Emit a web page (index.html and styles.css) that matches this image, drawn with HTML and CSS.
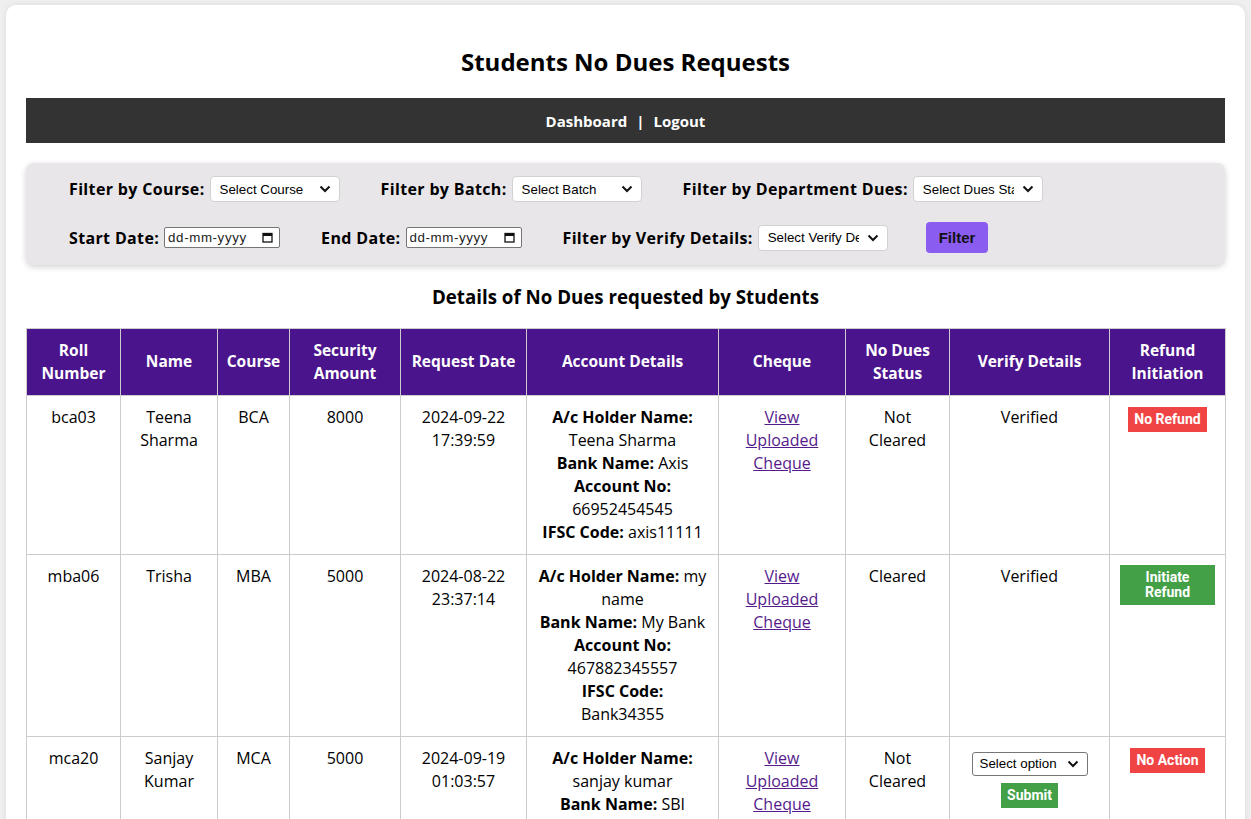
FILE: index.html
```html
<!DOCTYPE html>
<html lang="en">
<head>
<meta charset="utf-8">
<title>Students No Dues Requests</title>
<link rel="stylesheet" href="styles.css">
</head>
<body>
<div class="page">
  <h2 class="title">Students No Dues Requests</h2>
  <nav class="navbar">
    <a href="#" class="nav-link">Dashboard</a>
    <span class="sep">|</span>
    <a href="#" class="nav-link">Logout</a>
  </nav>

  <form class="filters">
    <div class="filter-row">
      <div class="field">
        <label class="flabel">Filter by Course:</label>
        <span class="sel-wrap">
          <select class="fsel"><option>Select Course</option></select>
          <svg class="chev" width="12" height="8" viewBox="0 0 12 8"><path d="M1.5 1.5 6 6l4.5-4.5" fill="none" stroke="#111" stroke-width="2"/></svg>
        </span>
      </div>
      <div class="field">
        <label class="flabel">Filter by Batch:</label>
        <span class="sel-wrap">
          <select class="fsel"><option>Select Batch</option></select>
          <svg class="chev" width="12" height="8" viewBox="0 0 12 8"><path d="M1.5 1.5 6 6l4.5-4.5" fill="none" stroke="#111" stroke-width="2"/></svg>
        </span>
      </div>
      <div class="field">
        <label class="flabel">Filter by Department Dues:</label>
        <span class="sel-wrap">
          <select class="fsel"><option>Select Dues Status</option></select>
          <svg class="chev" width="12" height="8" viewBox="0 0 12 8"><path d="M1.5 1.5 6 6l4.5-4.5" fill="none" stroke="#111" stroke-width="2"/></svg>
        </span>
      </div>
    </div>
    <div class="filter-row">
      <div class="field">
        <label class="flabel">Start Date:</label>
        <span class="date-wrap">
          <input type="text" class="fdate" placeholder="dd-mm-yyyy">
          <svg class="cal" width="11" height="11" viewBox="0 0 11 11"><rect x="1" y="1.5" width="9" height="8.5" fill="none" stroke="#111" stroke-width="1.3"/><rect x="1" y="1.5" width="9" height="2.5" fill="#111"/></svg>
        </span>
      </div>
      <div class="field">
        <label class="flabel">End Date:</label>
        <span class="date-wrap">
          <input type="text" class="fdate" placeholder="dd-mm-yyyy">
          <svg class="cal" width="11" height="11" viewBox="0 0 11 11"><rect x="1" y="1.5" width="9" height="8.5" fill="none" stroke="#111" stroke-width="1.3"/><rect x="1" y="1.5" width="9" height="2.5" fill="#111"/></svg>
        </span>
      </div>
      <div class="field">
        <label class="flabel">Filter by Verify Details:</label>
        <span class="sel-wrap">
          <select class="fsel"><option>Select Verify Details</option></select>
          <svg class="chev" width="12" height="8" viewBox="0 0 12 8"><path d="M1.5 1.5 6 6l4.5-4.5" fill="none" stroke="#111" stroke-width="2"/></svg>
        </span>
      </div>
      <button type="button" class="filter-btn">Filter</button>
    </div>
  </form>

  <h3 class="subtitle">Details of No Dues requested by Students</h3>

  <table class="dues">
    <colgroup>
      <col class="c-roll"><col class="c-name"><col class="c-course"><col class="c-amount"><col class="c-date">
      <col class="c-account"><col class="c-cheque"><col class="c-status"><col class="c-verify"><col class="c-refund">
    </colgroup>
    <thead>
      <tr>
        <th>Roll Number</th>
        <th>Name</th>
        <th>Course</th>
        <th>Security Amount</th>
        <th>Request Date</th>
        <th>Account Details</th>
        <th>Cheque</th>
        <th>No Dues Status</th>
        <th>Verify Details</th>
        <th>Refund Initiation</th>
      </tr>
    </thead>
    <tbody>
      <tr>
        <td>bca03</td>
        <td>Teena Sharma</td>
        <td>BCA</td>
        <td>8000</td>
        <td>2024-09-22 17:39:59</td>
        <td><b>A/c Holder Name:</b> Teena Sharma<br><b>Bank Name:</b> Axis<br><b>Account No:</b> 66952454545<br><b>IFSC Code:</b> axis11111</td>
        <td><a href="#" class="cheque-link">View Uploaded Cheque</a></td>
        <td>Not Cleared</td>
        <td>Verified</td>
        <td class="refund-cell"><span class="tag tag-red">No Refund</span></td>
      </tr>
      <tr>
        <td>mba06</td>
        <td>Trisha</td>
        <td>MBA</td>
        <td>5000</td>
        <td>2024-08-22 23:37:14</td>
        <td><b>A/c Holder Name:</b> my name<br><b>Bank Name:</b> My Bank<br><b>Account No:</b> 467882345557<br><b>IFSC Code:</b><br>Bank34355</td>
        <td><a href="#" class="cheque-link">View Uploaded Cheque</a></td>
        <td>Cleared</td>
        <td>Verified</td>
        <td class="refund-cell"><button type="button" class="refund-btn">Initiate Refund</button></td>
      </tr>
      <tr>
        <td>mca20</td>
        <td>Sanjay Kumar</td>
        <td>MCA</td>
        <td>5000</td>
        <td>2024-09-19 01:03:57</td>
        <td><b>A/c Holder Name:</b> sanjay kumar<br><b>Bank Name:</b> SBI<br><b>Account No:</b> 30245678912<br><b>IFSC Code:</b> SBIN0001234</td>
        <td><a href="#" class="cheque-link">View Uploaded Cheque</a></td>
        <td>Not Cleared</td>
        <td>
          <div class="verify-form">
            <span class="sel-wrap">
              <select class="vsel"><option>Select option</option></select>
              <svg class="chev" width="12" height="8" viewBox="0 0 12 8"><path d="M1.5 1.5 6 6l4.5-4.5" fill="none" stroke="#111" stroke-width="2"/></svg>
            </span>
            <button type="button" class="submit-btn">Submit</button>
          </div>
        </td>
        <td class="refund-cell"><span class="tag tag-red">No Action</span></td>
      </tr>
    </tbody>
  </table>
</div>
</body>
</html>
```

FILE: styles.css
```css
html, body {
  margin: 0;
  padding: 0;
}

body {
  background: #efefef;
  font-family: "Open Sans", "DejaVu Sans", sans-serif;
  color: #000;
  padding: 5px 6px;
}

.page {
  background: #fff;
  border-radius: 10px;
  box-shadow: 0 0 6px rgba(0, 0, 0, 0.08);
  padding: 20px 20px 40px;
}

.title {
  font-size: 24px;
  font-weight: 700;
  line-height: 33px;
  text-align: center;
  margin: 20px 0 20px;
}

.navbar {
  background: #333;
  height: 45px;
  display: flex;
  align-items: center;
  justify-content: center;
  gap: 9px;
  color: #fff;
  font-weight: 700;
  font-size: 15px;
}

.nav-link {
  color: #fff;
  text-decoration: none;
}

.sep {
  color: #fff;
}

.filters {
  margin-top: 20px;
  background: #e8e6e9;
  border-radius: 8px;
  box-shadow: 0 2px 6px rgba(0, 0, 0, 0.18);
  padding: 13px 20px 12px 43px;
  display: flex;
  flex-direction: column;
  gap: 20px;
}

.filter-row {
  display: flex;
  align-items: center;
  gap: 41px;
}

.field {
  display: flex;
  align-items: center;
  gap: 5px;
}

.flabel {
  font-weight: 700;
  font-size: 16px;
  letter-spacing: 0.35px;
}

.sel-wrap {
  position: relative;
  display: inline-flex;
}

.chev {
  position: absolute;
  right: 9px;
  top: 50%;
  margin-top: -4px;
  pointer-events: none;
}

.fsel {
  appearance: none;
  -webkit-appearance: none;
  width: 130px;
  height: 26px;
  background: #fff;
  border: 1px solid #d2d2d2;
  border-radius: 4px;
  padding: 0 28px 0 9px;
  font-family: "Liberation Sans", Arial, sans-serif;
  font-size: 13.33px;
  color: #000;
}

.date-wrap {
  position: relative;
  display: inline-flex;
}

.fdate {
  width: 116px;
  height: 21px;
  box-sizing: border-box;
  border: 1px solid #767676;
  border-radius: 2px;
  padding: 0 3px;
  font-family: "Liberation Sans", Arial, sans-serif;
  font-size: 13.33px;
  letter-spacing: 0.6px;
  background: #fff;
  color: #000;
}

.fdate::placeholder {
  color: #222;
  opacity: 1;
}

.cal {
  position: absolute;
  right: 7px;
  top: 5px;
  pointer-events: none;
}

.filter-btn {
  margin-left: -3px;
  background: #8b5cf0;
  color: #111;
  border: none;
  border-radius: 4px;
  height: 31px;
  padding: 0 13px;
  font-family: "Liberation Sans", Arial, sans-serif;
  font-weight: 700;
  font-size: 15px;
}

.subtitle {
  font-size: 18.72px;
  font-weight: 700;
  line-height: 26px;
  text-align: center;
  margin: 18.7px 0 18px;
}

.dues {
  width: 100%;
  border-collapse: collapse;
  table-layout: fixed;
  font-size: 16px;
  line-height: 23px;
}

.c-roll { width: 94px; }
.c-name { width: 97px; }
.c-course { width: 72px; }
.c-amount { width: 111px; }
.c-date { width: 126px; }
.c-account { width: 192px; }
.c-cheque { width: 127px; }
.c-status { width: 104px; }
.c-verify { width: 160px; }
.c-refund { width: 116px; }

.dues th,
.dues td {
  border: 1px solid #cccccc;
  padding: 10px 8px;
  text-align: center;
}

.dues th {
  background: #4a148c;
  color: #fff;
  font-weight: 700;
  font-size: 15.5px;
  vertical-align: middle;
}

.dues td {
  vertical-align: top;
}

.dues td.refund-cell {
  padding: 10px;
}

.cheque-link {
  color: #551a8b;
  text-decoration: underline;
}

.tag {
  display: inline-block;
  font-family: Roboto, "Liberation Sans", sans-serif;
  font-weight: 700;
  font-size: 14px;
  line-height: 15px;
  color: #fff;
  padding: 5px 6px;
  margin-top: 1px;
}

.tag-red {
  background: #f04444;
}

.refund-btn {
  display: block;
  width: 100%;
  background: #43a047;
  color: #fff;
  border: none;
  font-family: Roboto, "Liberation Sans", sans-serif;
  font-weight: 700;
  font-size: 14px;
  line-height: 15px;
  padding: 5px 8px;
}

.verify-form {
  display: flex;
  flex-direction: column;
  align-items: center;
  gap: 7px;
  padding-top: 5px;
}

.vsel {
  appearance: none;
  -webkit-appearance: none;
  width: 116px;
  height: 24px;
  border: 1px solid #767676;
  border-radius: 3px;
  background: #fff;
  padding: 0 28px 0 7px;
  font-family: "Liberation Sans", Arial, sans-serif;
  font-size: 13.33px;
  color: #000;
}

.submit-btn {
  background: #43a047;
  color: #fff;
  border: none;
  font-family: Roboto, "Liberation Sans", sans-serif;
  font-weight: 700;
  font-size: 14px;
  line-height: 15px;
  padding: 5px 6px;
}
```
